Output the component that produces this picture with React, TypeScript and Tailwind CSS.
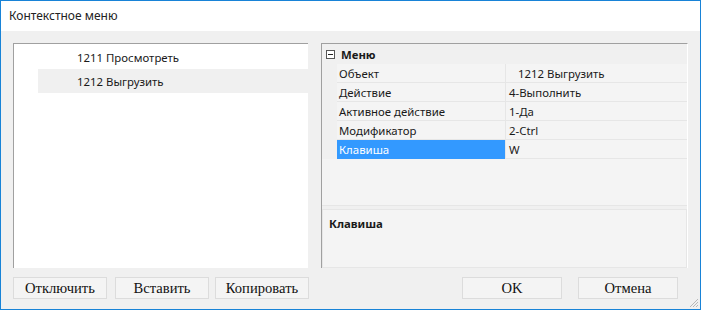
const ui = "font-['Segoe_UI','Noto_Sans','Liberation_Sans',sans-serif] text-[11.4px]";
const serif = "font-['Liberation_Serif','Times_New_Roman',serif] text-[14.6px]";

type Row = { name: string; value: string; indent?: boolean; selected?: boolean };

const rows: Row[] = [
  { name: 'Объект', value: '1212 Выгрузить', indent: true },
  { name: 'Действие', value: '4-Выполнить' },
  { name: 'Активное действие', value: '1-Да' },
  { name: 'Модификатор', value: '2-Ctrl' },
  { name: 'Клавиша', value: 'W', selected: true },
];

function Button({ label, className }: { label: string; className: string }) {
  return (
    <button
      className={`h-[22px] border border-[#dcdcdc] bg-[#f4f4f4] text-[#111] leading-none ${serif} ${className}`}
    >
      {label}
    </button>
  );
}

export default function App() {
  return (
    <div className={`relative flex h-[310px] w-[701px] flex-col border border-[#1883d7] bg-[#f0f0f0] text-[#1a1a1a] ${ui}`}>
      {/* заголовок */}
      <div className="flex h-[30px] shrink-0 items-center bg-white pl-[8px] text-[12px] text-[#222]">Контекстное меню</div>

      <div className="flex h-[225px] shrink-0 gap-[13px] pl-[12px] pr-[12px] pt-[12px] box-content">
        {/* список */}
        <div className="w-[295px] border-l border-t border-[#a0a0a0] bg-white pt-[1px]">
          <div className="flex h-[24px] items-center pl-[63px] pt-[2px]">1211 Просмотреть</div>
          <div className="ml-[24px] flex h-[24px] items-center bg-[#f0f0f0] pl-[39px] pt-[2px]">1212 Выгрузить</div>
        </div>

        {/* свойства */}
        <div className="flex w-[367px] flex-col border-l border-t border-r border-[#a0a0a0] border-r-white">
          <div className="flex h-[20px] items-center bg-[#f0f0f0] pl-[4px] pt-[1px] font-bold">
            <svg width="9" height="9" viewBox="0 0 9 9" className="mr-[6px]">
              <rect x="0.5" y="0.5" width="8" height="8" fill="white" stroke="#555" />
              <path d="M2 4.5h5" stroke="#222" />
            </svg>
            <span className="pt-[1px]">Меню</span>
          </div>
          {rows.map((r) => (
            <div key={r.name} className="flex h-[19px] bg-[#f0f0f0]">
              <div className="w-[15px]" />
              <div
                className={`flex w-[168px] items-center border-b border-[#e6e6e6] pl-[2px] pt-[2px] ${
                  r.selected ? 'bg-[#3399ff] text-white border-b-[#3399ff]' : 'bg-[#f4f4f4]'
                }`}
              >
                {r.name}
              </div>
              <div
                className={`flex flex-1 items-center border-b border-l border-[#e6e6e6] bg-[#f4f4f4] pt-[2px] ${
                  r.indent ? 'pl-[12px]' : 'pl-[3px]'
                }`}
              >
                {r.value}
              </div>
            </div>
          ))}
          <div className="h-[47px] border-b border-[#e6e6e6] bg-[#f4f4f4]" />
          <div className="h-[3px] bg-[#f0f0f0]" />
          <div className="flex-1 border border-[#e6e6e6] bg-[#f4f4f4] pl-[6px] pt-[5px] font-bold">Клавиша</div>
        </div>
      </div>

      {/* кнопки */}
      <div className="mt-[9px] flex pl-[12px]">
        <Button label="Отключить" className="w-[94px]" />
        <Button label="Вставить" className="ml-[8px] w-[94px]" />
        <Button label="Копировать" className="ml-[6px] w-[94px]" />
        <Button label="OK" className="ml-[153px] w-[100px]" />
        <Button label="Отмена" className="ml-[16px] w-[100px]" />
      </div>

      <svg width="12" height="12" viewBox="0 0 12 12" className="absolute bottom-[1px] right-[1px]">
        <path d="M11 3L3 11M11 6L6 11M11 9L9 11" stroke="#b8b8b8" strokeWidth="1" />
      </svg>
    </div>
  );
}
